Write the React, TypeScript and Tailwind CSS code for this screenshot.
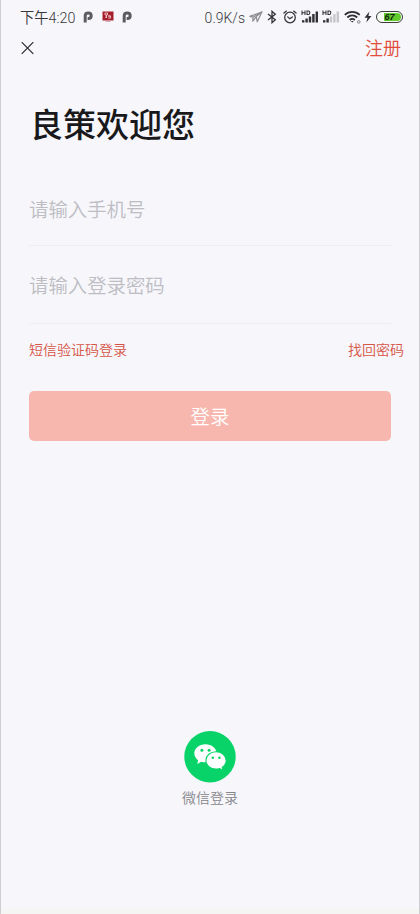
import { type ReactNode } from 'react';

/* ---------- status bar icons ---------- */

function ParkingIcon() {
    return (
        <svg className="h-3 w-2.5 shrink-0" viewBox="0 0 10 12" fill="none">
            <path d="M2.200 11.600V4.800C2.200 3 3.600 2 5.200 2C6.900 2 8.200 3.200 8.200 4.800C8.200 6.500 6.900 7.600 5.300 7.600H4.600" stroke="#5c5c60" strokeWidth="3" />
        </svg>
    );
}

function NoticeIcon() {
    return (
        <svg className="h-3 w-3 shrink-0" viewBox="0 0 12 12">
            <rect x="0.500" y="0.500" width="11" height="9" fill="#a5202c" />
            <path d="M3 2h2.500v2H3zM4.500 4v3M3 6.500L5 5.500M7 4v4M6.500 5h2.500M8.500 5v2.500" fill="none" stroke="#efc7ca" strokeWidth="0.900" />
            <path d="M3.500 10.500h5" stroke="#d9a5ab" strokeWidth="0.900" />
        </svg>
    );
}

function PlaneIcon() {
    return (
        <svg className="h-3 w-3.5 shrink-0" viewBox="0 0 14 12" fill="none" stroke="#8d8d92" strokeWidth="1.200" strokeLinejoin="round">
            <path d="M0.800 5.400L12.800 1L8.300 10.800L7.200 5.600L3.800 10.200L4 6.200Z" />
            <path d="M4 6.200L12.800 1L7.200 5.600" />
        </svg>
    );
}

function BluetoothIcon() {
    return (
        <svg className="h-3.5 w-2.5 shrink-0" viewBox="0 0 10 14" fill="none" stroke="#353538" strokeWidth="1.300">
            <path d="M1 4L8.300 9.800L5 12.700V1.300L8.300 4.200L1 10" />
        </svg>
    );
}

function AlarmIcon() {
    return (
        <svg className="h-3.5 w-3.5 shrink-0" viewBox="0 0 14 14" fill="none" stroke="#353538" strokeWidth="1.250" strokeLinecap="round">
            <circle cx="7" cy="7.500" r="5.300" />
            <path d="M4.700 6.900L6.800 8.800L9.400 6.900M0.900 3.100L3.400 1.100M13.100 3.100L10.600 1.100" />
        </svg>
    );
}

function SignalIcon({ weak = false }: { weak?: boolean }) {
    const off = weak ? '#c6c6cb' : '#303033';
    return (
        <svg className="h-3.5 w-[18px] shrink-0" viewBox="0 0 18 14">
            <path d="M1 0.500v4.500M4 0.500v4.500M1 2.700h3M6 1v3.500h1.300q1.500 0 1.500-1.750t-1.500-1.750z" fill="none" stroke="#303033" strokeWidth="1.050" />
            <rect x="1" y="10.200" width="2.400" height="2.300" fill="#303033" />
            <rect x="4.400" y="8.500" width="2.400" height="4" fill="#303033" />
            <rect x="7.800" y="6.500" width="2.400" height="6" fill={off} />
            <rect x="11.200" y="4" width="2.400" height="8.500" fill={off} />
            <rect x="14.600" y="1.500" width="2.400" height="11" fill={off} />
        </svg>
    );
}

function WifiIcon() {
    return (
        <svg className="h-3.5 w-[17px] shrink-0" viewBox="0 0 17 14" fill="none" stroke="#303033" strokeWidth="1.800">
            <path d="M0.800 4.900C5 0.900 11.500 0.900 15.700 4.900M3.300 7.500C6.200 4.800 10.300 4.800 13.200 7.500M5.700 10C7.300 8.600 9.200 8.600 10.800 10" />
            <path d="M6.800 10.900L8.250 12.600L9.700 10.900Z" fill="#303033" stroke="none" />
            <circle cx="14.800" cy="11.900" r="1.300" stroke="#838387" strokeWidth="1" />
        </svg>
    );
}

function BoltIcon() {
    return (
        <svg className="h-3 w-2 shrink-0" viewBox="0 0 8 12">
            <path d="M5.400 0.500L0.500 6.700H3.500L2.300 11.500L7.500 4.900H4.400Z" fill="#303033" />
        </svg>
    );
}

function Battery({ level }: { level: number }) {
    return (
        <div className="relative h-3 w-[27px] shrink-0">
            <div className="flex h-3 w-[27px] justify-end rounded-full border border-[#3b3b3d] bg-[#f6fbf2] p-px">
                <div className="h-2 w-[17px] rounded-r-full bg-[#60c92e]" />
            </div>
            <span className="absolute inset-0 text-center font-['Liberation_Sans'] text-[9px] leading-3 font-bold text-[#102408] italic">
                {level}
            </span>
        </div>
    );
}

function StatusBar() {
    return (
        <div className="flex h-[34px] items-center justify-between pr-4 pl-[19px] text-[#38383b]">
            <div className="flex items-center">
                <span className="w-[63px] pt-px text-[14.300px] leading-5 font-[350] whitespace-nowrap">下午4:20</span>
                <ParkingIcon />
                <div className="w-[9px]" />
                <NoticeIcon />
                <div className="w-2" />
                <ParkingIcon />
            </div>
            <div className="flex items-center">
                <span className="mr-1 pt-px text-[14px] leading-5 font-[350]">0.9K/s</span>
                <PlaneIcon />
                <div className="w-1" />
                <BluetoothIcon />
                <div className="w-1.5" />
                <AlarmIcon />
                <div className="w-1" />
                <SignalIcon />
                <div className="w-[3px]" />
                <SignalIcon weak />
                <div className="w-1" />
                <WifiIcon />
                <div className="w-[3px]" />
                <BoltIcon />
                <div className="w-1" />
                <Battery level={67} />
            </div>
        </div>
    );
}

/* ---------- login page ---------- */

function WechatIcon() {
    return (
        <svg className="h-[52px] w-[52px]" viewBox="0 0 52 52">
            <circle cx="26" cy="25.700" r="25.700" fill="#07d368" />
            <path d="M21.500 13.200C15.300 13.200 10.300 17.200 10.300 22.300C10.300 25.100 11.700 27.500 14.100 29.200L13.300 32.900L17.300 30.700C18.500 31.100 20 31.300 21.500 31.300C27.700 31.300 32.500 27.300 32.500 22.300C32.500 17.200 27.700 13.200 21.500 13.200Z" fill="#fff" />
            <path d="M32 20.700C26.400 20.700 21.900 24.600 21.900 29.400C21.900 34.200 26.400 38.100 32 38.100C33.300 38.100 34.500 37.900 35.600 37.500L39.100 39.500L38.300 36.300C40.700 34.700 42.200 32.300 42.200 29.400C42.200 24.600 37.600 20.700 32 20.700Z" fill="#fff" stroke="#07d368" strokeWidth="1.100" />
            <g fill="#07d368">
                <circle cx="17.900" cy="19.300" r="1.500" />
                <circle cx="25.100" cy="19.300" r="1.500" />
                <circle cx="28.800" cy="26.800" r="1.300" />
                <circle cx="35.400" cy="26.800" r="1.300" />
            </g>
        </svg>
    );
}

function Field({ children }: { children: ReactNode }) {
    return (
        <div className="mx-7 flex items-center border-b border-[#eeeeec] text-[19.400px] font-[350] text-[#bdbdc3]">
            {children}
        </div>
    );
}

export default function App() {
    return (
        <div className="flex h-[914px] w-[420px] flex-col border-x border-[#ceced3] bg-[#f6f6fb] font-['Roboto','Noto_Sans_CJK_SC',sans-serif]">
            <StatusBar />

            <header className="flex h-7 items-center justify-between pr-[18px] pl-5">
                <button aria-label="关闭">
                    <svg className="h-[13px] w-[13px]" viewBox="0 0 13 13" stroke="#29292b" strokeWidth="1.200">
                        <path d="M0.700 0.200L12.300 11.800M12.300 0.200L0.700 11.800" />
                    </svg>
                </button>
                <button className="pt-0.5 text-lg leading-7 font-[350] text-[#e24c3a]">注册</button>
            </header>

            <h1 className="mt-[38px] pl-[29px] text-[33px] leading-[52px] font-medium text-[#19191b]">良策欢迎您</h1>

            <div className="mt-5 flex flex-col">
                <Field>
                    <span className="pt-[15px] pb-[11px] leading-[47px]">请输入手机号</span>
                </Field>
                <Field>
                    <span className="pt-[17px] pb-[13px] leading-[47px]">请输入登录密码</span>
                </Field>
            </div>

            <div className="mt-4 flex justify-between pr-[15px] pl-7 text-sm leading-5 font-[350] text-[#d65446]">
                <button>短信验证码登录</button>
                <button>找回密码</button>
            </div>

            <button className="mx-7 mt-[31px] h-[50px] rounded-[5px] bg-[#f8b7ae] pt-1 text-[19.400px] font-[350] text-white">
                登录
            </button>

            <div className="mt-auto flex flex-col items-center pb-[100px]">
                <WechatIcon />
                <span className="mt-[5px] text-sm leading-5 font-[350] text-[#85858a]">微信登录</span>
            </div>
            <div className="h-1.5 bg-[#f5f5f3]" />
        </div>
    );
}
